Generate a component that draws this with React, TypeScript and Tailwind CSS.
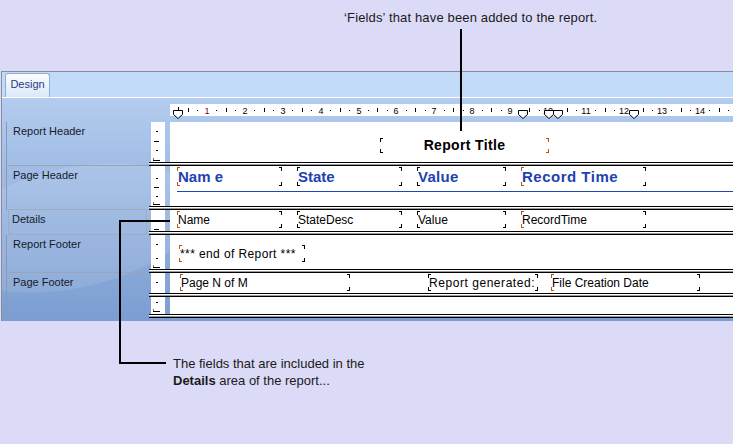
import React from "react";

type Fld = { pos: string; t: string; lo?: boolean; ro?: boolean; extra?: string };
type Mark = [number, "s" | "m" | "l"];

function Corners({ lo, ro }: { lo?: boolean; ro?: boolean }) {
  const l = lo ? "border-[#b4571e]" : "border-black";
  const r = ro ? "border-[#b4571e]" : "border-black";
  return (
    <>
      <span className={`absolute left-0 top-0 w-[3px] h-[4px] border-l border-t ${l}`} />
      <span className={`absolute left-0 bottom-0 w-[3px] h-[4px] border-l border-b ${l}`} />
      <span className={`absolute right-0 top-0 w-[3px] h-[4px] border-r border-t ${r}`} />
      <span className={`absolute right-0 bottom-0 w-[3px] h-[4px] border-r border-b ${r}`} />
    </>
  );
}

function Field({ f, text, center }: { f: Fld; text: string; center?: boolean }) {
  return (
    <div className={`absolute flex items-center ${center ? "justify-center" : ""} ${f.pos}`}>
      <Corners lo={f.lo} ro={f.ro} />
      <span className={`whitespace-nowrap ${center ? "" : "pl-[1px]"} ${text} ${f.extra ?? ""}`}>{f.t}</span>
    </div>
  );
}

function VRuler({ h, marks }: { h: number; marks: Mark[] }) {
  return (
    <svg width={14} height={h} className="block">
      {marks.map(([y, k], i) =>
        k === "s" ? (
          <rect key={i} x={5} y={y} width={2} height={1} fill="#000" />
        ) : k === "m" ? (
          <rect key={i} x={3} y={y} width={5} height={1} fill="#000" />
        ) : (
          <g key={i}>
            <rect x={2} y={y} width={7} height={1} fill="#000" />
            <rect x={2} y={y - 2} width={1} height={2} fill="#c0601c" />
          </g>
        )
      )}
    </svg>
  );
}

function HRuler() {
  const u = 37.9;
  const ticks: React.ReactNode[] = [];
  for (let k = 0; k < 15; k++) {
    for (const q of [1, 2, 3]) {
      const x = Math.round((k + q / 4) * u - 1);
      if (x > 563) continue;
      ticks.push(
        q === 2 ? (
          <rect key={`${k}-${q}`} x={x} y={10} width={1} height={4} fill="#000" />
        ) : (
          <rect key={`${k}-${q}`} x={x} y={12} width={1} height={1} fill="#000" />
        )
      );
    }
  }
  const markers = [8, 353, 379, 388, 464];
  return (
    <svg width={563} height={24} className="block">
      <rect x={0} y={6} width={563} height={12} fill="#fff" />
      {ticks}
      {Array.from({ length: 14 }, (_, i) => i + 1).map((n) => (
        <text
          key={n}
          x={Math.round(n * u - 1)}
          y={15.5}
          fontSize={9}
          textAnchor="middle"
          fill={n === 1 ? "#6a0a2a" : "#000"}
          fontFamily="'Liberation Sans', Arial, sans-serif"
        >
          {n}
        </text>
      ))}
      <rect x={8} y={9} width={1} height={4} fill="#000" />
      {markers.map((x) => (
        <polygon
          key={x}
          points={`${x - 4.5},12.5 ${x + 4.5},12.5 ${x + 4.5},16.5 ${x},20.5 ${x - 4.5},16.5`}
          fill="#fff"
          stroke="#000"
          strokeWidth={1}
        />
      ))}
    </svg>
  );
}

function Separator() {
  return <div className="h-[4px] border-y border-black bg-[linear-gradient(to_bottom,#ffffff_50%,#9a9a9a_50%)]" />;
}

function Section({
  label,
  hClass,
  h,
  marks,
  cell,
  children,
}: {
  label?: string;
  hClass: string;
  h: number;
  marks: Mark[];
  cell: "line" | "lineDiv" | "box";
  children?: React.ReactNode;
}) {
  const labelText = label ? (
    <div className="pl-[6px] pt-[3px] text-[11px] leading-[13px] text-[#161a2a] whitespace-nowrap">{label}</div>
  ) : null;
  return (
    <div className="flex">
      <div className="w-[147px] pl-[4px] flex">
        {cell === "box" ? (
          <div className="flex-1 ml-[2px] mr-[2px] -mt-[1px] border border-[#a2abbd]">
            <div className="pl-[3px] pt-[3px] text-[11px] leading-[13px] text-[#161a2a]">{label}</div>
          </div>
        ) : (
          <div className={`flex-1 border-l border-[#8d98ad] ${cell === "lineDiv" ? "border-b border-b-[#9ba4b6]" : ""}`}>
            {labelText}
          </div>
        )}
      </div>
      <div className="flex-1 flex flex-col">
        <div className={`flex ${hClass}`}>
          <div className="ml-[2px] w-[14px] bg-white">
            <VRuler h={h} marks={marks} />
          </div>
          <div className="w-[5px]" />
          <div className="flex-1 bg-white relative">{children}</div>
        </div>
        <Separator />
      </div>
    </div>
  );
}

const blue = "text-[15px] font-bold text-[#1e42b0] leading-[17px]";
const plain = "text-[12px] text-black leading-[14px]";

const header: Fld[] = [
  { pos: "left-[7px] top-[1px] w-[105px] h-[19px]", t: "Nam e", lo: true },
  { pos: "left-[127px] top-[1px] w-[105px] h-[19px]", t: "State" },
  { pos: "left-[247px] top-[1px] w-[89px] h-[19px]", t: "Value", extra: "tracking-[0.3px]" },
  { pos: "left-[351px] top-[1px] w-[125px] h-[19px]", t: "Record Time", lo: true, extra: "tracking-[0.5px]" },
];

const details: Fld[] = [
  { pos: "left-[7px] top-[1px] w-[105px] h-[17px]", t: "Name", lo: true },
  { pos: "left-[127px] top-[1px] w-[105px] h-[17px]", t: "StateDesc" },
  { pos: "left-[247px] top-[1px] w-[89px] h-[17px]", t: "Value" },
  { pos: "left-[351px] top-[1px] w-[125px] h-[17px]", t: "RecordTime", lo: true },
];

const footer: Fld[] = [
  { pos: "left-[10px] top-[1px] w-[170px] h-[17px]", t: "Page N of M", lo: true },
  { pos: "left-[258px] top-[1px] w-[110px] h-[17px]", t: "Report generated:", extra: "tracking-[0.55px]" },
  { pos: "left-[381px] top-[1px] w-[149px] h-[17px]", t: "File Creation Date", lo: true },
];

export default function App() {
  return (
    <div className="relative w-[733px] h-[444px] overflow-hidden bg-[#dcdbf7] font-['Liberation_Sans',Arial,sans-serif] text-[#1a1a1a]">
      {/* top note */}
      <div className="h-[71px] pl-[344px] pt-[9px] text-[13px] leading-[17px] tracking-[0.15px]">
        ‘Fields’ that have been added to the report.
      </div>

      {/* designer window */}
      <div className="ml-[1px] h-[250px] border-t border-l border-[#8a8c98] flex flex-col">
        <div className="h-[25px] bg-[#c1dbf9] flex items-end pl-[3px]">
          <div className="h-[24px] w-[45px] rounded-t-[3px] border border-b-0 border-[#8eaed6] bg-gradient-to-b from-[#fbfdff] to-[#dbe8f8] flex justify-center pt-[4px] text-[11px] leading-[13px] text-[#1f3b7c]">
            Design
          </div>
        </div>
        <div className="h-[1px] bg-white" />
        <div className="relative h-[223px] overflow-hidden bg-gradient-to-b from-[#b3ccef] to-[#7b9dd1] flex flex-col">
          {/* soft highlight sweep behind the section labels */}
          <div className="absolute left-[-60px] top-[70px] w-[260px] h-[120px] rounded-[50%] bg-white/10 rotate-[-12deg]" />
          <div className="relative h-[24px] flex">
            <div className="w-[168px]" />
            <HRuler />
          </div>

          <div className="relative flex flex-col">
            <Section label="Report Header" hClass="h-[40px]" h={40} marks={[[9, "s"], [19, "m"], [28, "s"], [38, "l"]]} cell="lineDiv">
              <Field
                f={{ pos: "left-[210px] top-[16px] w-[169px] h-[15px]", t: "Report Title", ro: true }}
                text="text-[14px] font-bold text-black leading-[15px] tracking-[0.35px]"
                center
              />
            </Section>

            <Section label="Page Header" hClass="h-[40px]" h={40} marks={[[12, "s"], [21, "m"], [30, "s"], [38, "l"]]} cell="line">
              {header.map((f) => (
                <Field key={f.t} f={f} text={blue} />
              ))}
              <div className="absolute left-[7px] right-0 top-[25px] h-[1px] bg-[#1f47b5]" />
            </Section>

            <Section label="Details" hClass="h-[21px]" h={21} marks={[[10, "s"], [19, "m"]]} cell="box">
              {details.map((f) => (
                <Field key={f.t} f={f} text={plain} />
              ))}
            </Section>

            <Section label="Report Footer" hClass="h-[34px]" h={34} marks={[[9, "s"], [23, "s"], [32, "l"]]} cell="lineDiv">
              <Field
                f={{ pos: "left-[9px] top-[10px] w-[126px] h-[17px]", t: "*** end of Report ***", lo: true }}
                text={`${plain} tracking-[0.4px]`}
              />
            </Section>

            <Section label="Page Footer" hClass="h-[20px]" h={20} marks={[[9, "s"]]} cell="line">
              {footer.map((f) => (
                <Field key={f.t} f={f} text={plain} />
              ))}
            </Section>

            <Section hClass="h-[17px]" h={17} marks={[[5, "s"], [14, "l"]]} cell="line" />
          </div>
        </div>
      </div>

      {/* bottom note */}
      <div className="pl-[173px] pt-[34px] text-[13px] leading-[17px]">
        <div>The fields that are included in the</div>
        <div>
          <span className="font-bold">Details</span> area of the report...
        </div>
      </div>

      {/* callout lines */}
      <div className="absolute left-[460px] top-[29px] w-[2px] h-[102px] bg-black" />
      <div className="absolute left-[119px] top-[220px] w-[51px] h-[2px] bg-black" />
      <div className="absolute left-[119px] top-[220px] w-[2px] h-[144px] bg-black" />
      <div className="absolute left-[119px] top-[362px] w-[47px] h-[2px] bg-black" />
    </div>
  );
}
